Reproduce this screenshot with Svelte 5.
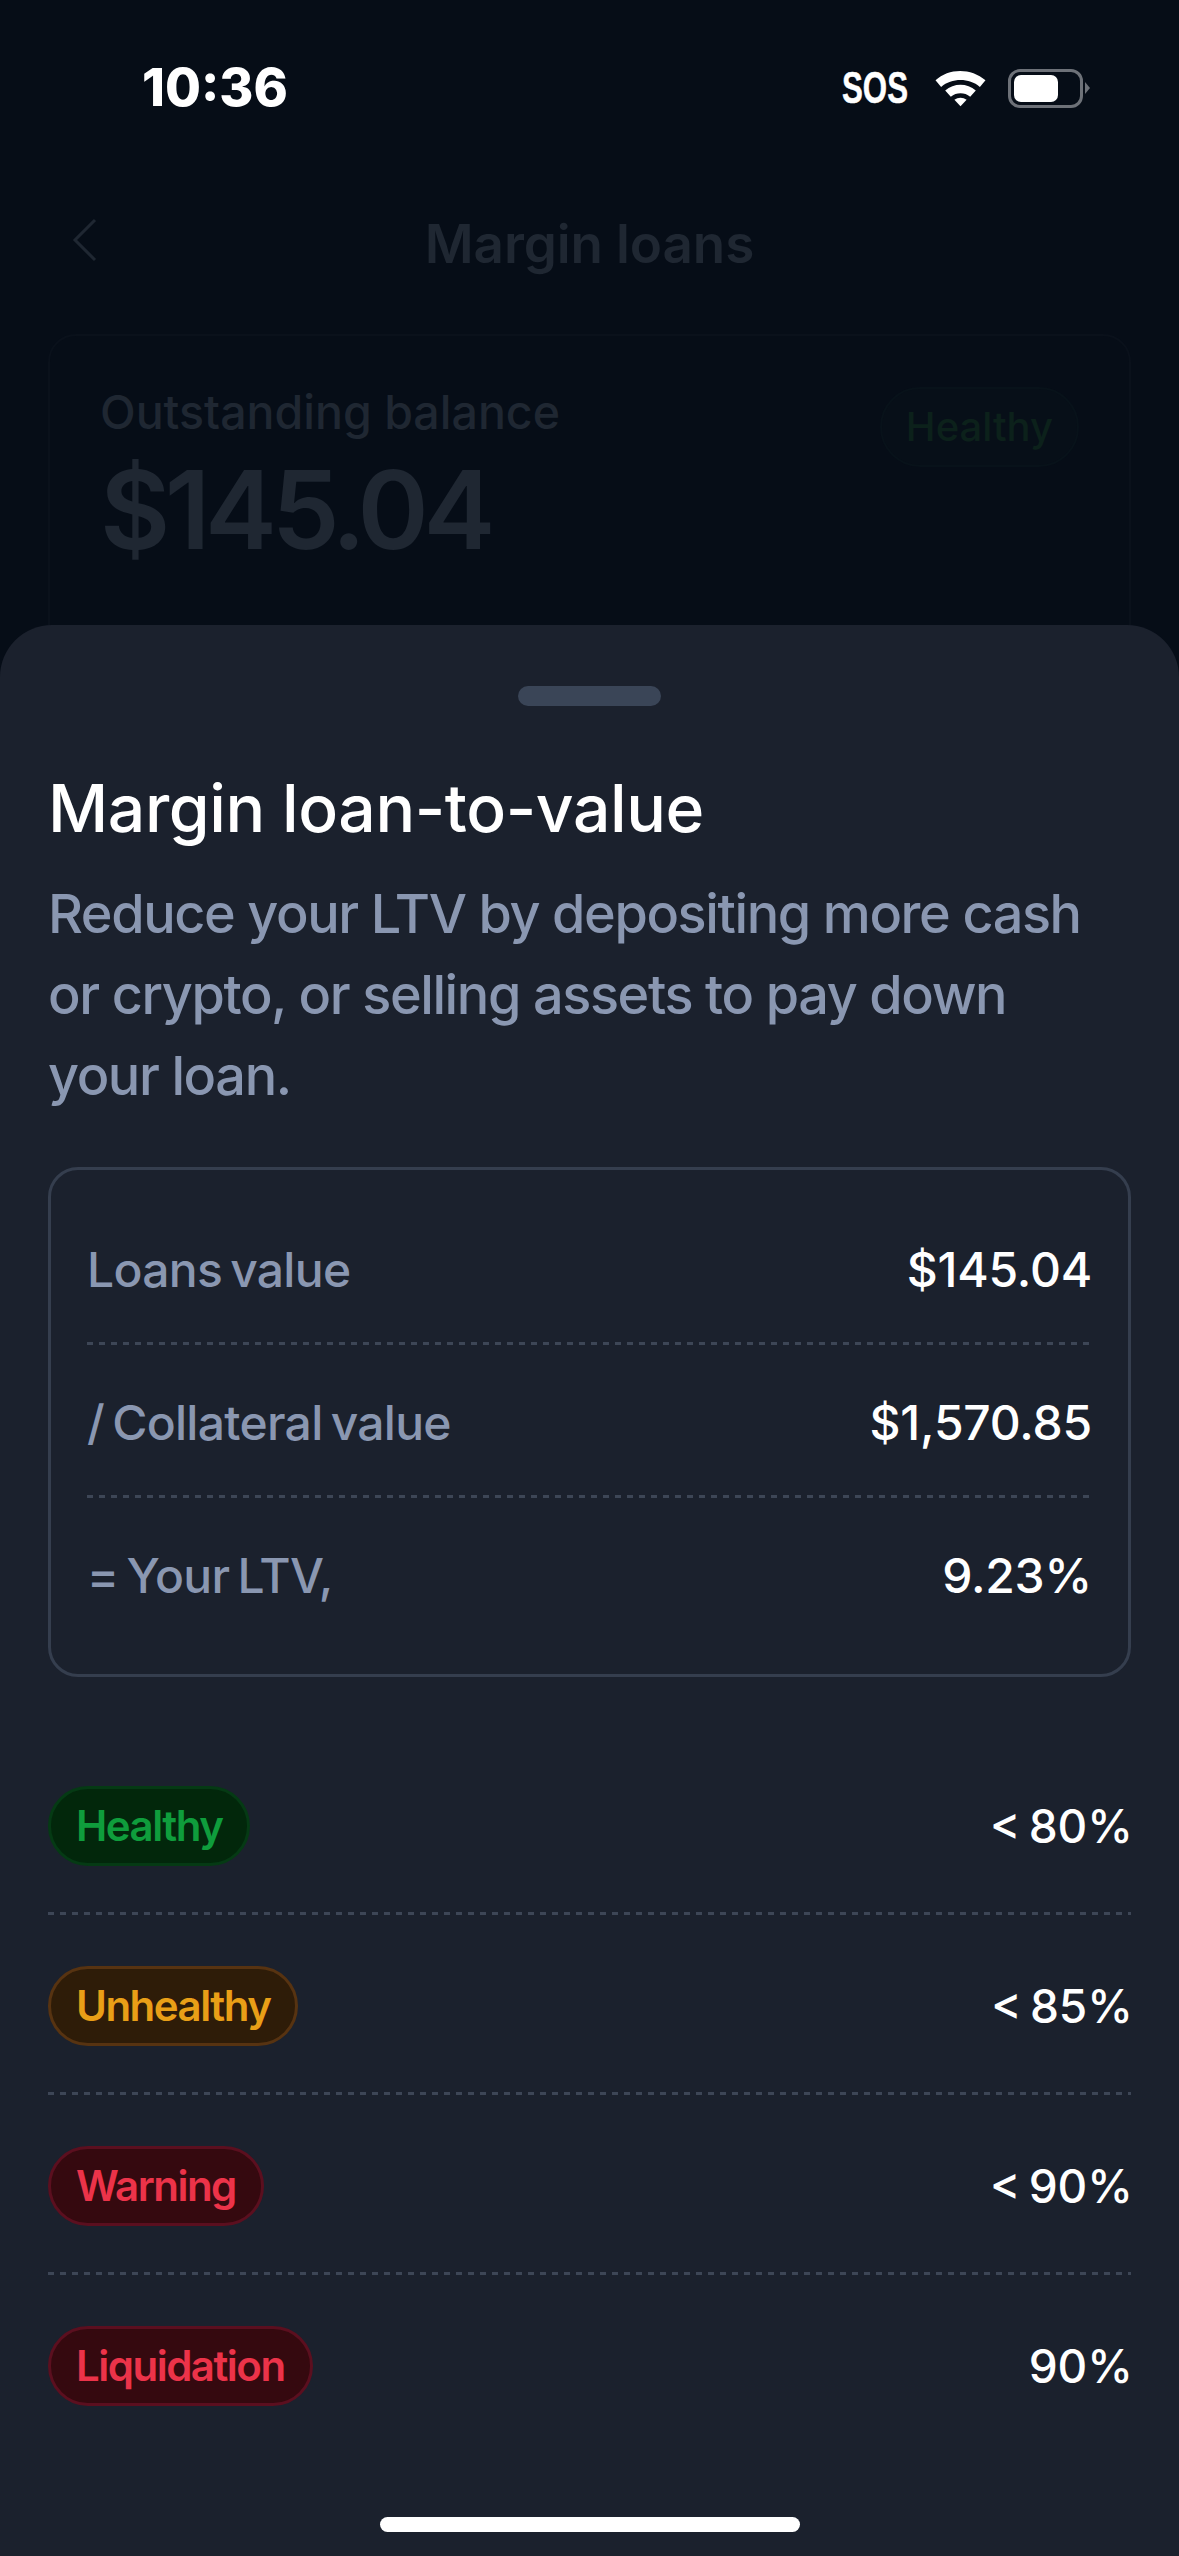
<script>
  const rows = [
    { label: 'Loans value', value: '$145.04' },
    { label: '/ Collateral value', value: '$1,570.85' },
    { label: '= Your LTV,', value: '9.23%' }
  ];
  const tiers = [
    { name: 'Healthy', tone: 'green', limit: '< 80%' },
    { name: 'Unhealthy', tone: 'amber', limit: '< 85%' },
    { name: 'Warning', tone: 'red', limit: '< 90%' },
    { name: 'Liquidation', tone: 'red', limit: '90%' }
  ];
</script>

<div class="screen">
  <div class="status">
    <span class="time">10:36</span>
    <div class="status-right">
      <span class="sos">SOS</span>
      <svg class="wifi" width="51" height="38" viewBox="0 0 50 36" aria-hidden="true">
        <path d="M0.5 10.5C13.5-1.8 35.5-1.8 49.5 10.5L44 17C33.5 8 16.5 8 6 17Z" fill="#fff"/>
        <path d="M10 20.5C18.5 13 31.5 13 40 20.5L34.5 26.5C29 22 21 22 15.5 26.5Z" fill="#fff"/>
        <path d="M19 29.5C22.5 26.8 27.5 26.8 31 29.5L25 36Z" fill="#fff"/>
      </svg>
      <div class="battery"><div class="battery-level"></div></div>
      <div class="battery-cap"></div>
    </div>
  </div>

  <div class="nav">
    <svg class="back" width="26" height="44" viewBox="0 0 26 44" aria-hidden="true">
      <path d="M23 2 3 22l20 20" fill="none" stroke="#1f2732" stroke-width="3"/>
    </svg>
    <span class="nav-title">Margin loans</span>
  </div>

  <div class="bg-card">
    <div class="bg-head">
      <div>
        <div class="bg-label">Outstanding balance</div>
        <div class="bg-amount">$145.04</div>
      </div>
      <span class="bg-pill">Healthy</span>
    </div>
  </div>

  <div class="sheet">
    <div class="grabber"></div>
    <h1>Margin loan-to-value</h1>
    <p>Reduce your LTV by depositing more cash or crypto, or selling assets to pay down your loan.</p>

    <div class="calc">
      {#each rows as row, i}
        {#if i > 0}<div class="dash"></div>{/if}
        <div class="calc-row">
          <span class="calc-label">{row.label}</span>
          <span class="calc-value">{row.value}</span>
        </div>
      {/each}
    </div>

    <div class="tiers">
      {#each tiers as tier, i}
        {#if i > 0}<div class="dash"></div>{/if}
        <div class="tier">
          <span class="pill {tier.tone}">{tier.name}</span>
          <span class="limit">{tier.limit}</span>
        </div>
      {/each}
    </div>

    <div class="home"></div>
  </div>
</div>

<style>
  :global(body) {
    margin: 0;
    background: #060d17;
  }
  .screen {
    position: relative;
    width: 1179px;
    height: 2556px;
    overflow: hidden;
    background: #060d17;
    font-family: Inter, "Liberation Sans", sans-serif;
  }
  .status {
    height: 176px;
    box-sizing: border-box;
    padding: 60px 89px 0 142px;
    display: flex;
    justify-content: space-between;
    align-items: flex-start;
  }
  .time {
    font-size: 52px;
    line-height: 56px;
    font-weight: 800;
    color: #fff;
    font-family: Inter, sans-serif;
  }
  .status-right {
    display: flex;
    align-items: center;
    height: 56px;
  }
  .sos {
    font-family: "Liberation Sans", sans-serif;
    font-weight: 700;
    font-size: 44px;
    color: #fff;
    -webkit-text-stroke: 0.5px #fff;
    transform: scaleX(0.71);
    transform-origin: left center;
    width: 66px;
  }
  .wifi {
    margin-left: 27px;
  }
  .battery {
    margin-left: 22px;
    width: 75px;
    height: 39px;
    box-sizing: border-box;
    border: 3px solid #6d7178;
    border-radius: 12px;
    padding: 3px;
  }
  .battery-level {
    width: 44px;
    height: 27px;
    background: #fff;
    border-radius: 7px;
  }
  .battery-cap {
    margin-left: 2px;
    width: 0;
    height: 0;
    border-left: 5px solid #6d7178;
    border-top: 6px solid transparent;
    border-bottom: 6px solid transparent;
  }
  .nav {
    position: relative;
    height: 136px;
    display: flex;
    align-items: center;
    justify-content: center;
  }
  .back {
    position: absolute;
    left: 72px;
    top: 42px;
  }
  .nav-title {
    font-size: 53px;
    letter-spacing: -0.1px;
    font-weight: 600;
    color: #1f2732;
  }
  .bg-card {
    margin: 22px 48px 0;
    height: 500px;
    box-sizing: border-box;
    border: 2px solid #0a111b;
    border-radius: 28px;
    padding: 48px 50px;
  }
  .bg-head {
    display: flex;
    justify-content: space-between;
    align-items: flex-start;
  }
  .bg-label {
    font-size: 46.5px;
    line-height: 56px;
    font-weight: 500;
    color: #1f2732;
  }
  .bg-amount {
    margin-top: 10px;
    font-size: 108px;
    letter-spacing: -5.4px;
    line-height: 120px;
    font-weight: 600;
    color: #1f2732;
  }
  .bg-pill {
    margin-top: 3px;
    padding: 14px 24px;
    font-size: 40px;
    line-height: 48px;
    font-weight: 500;
    color: #0c211b;
    background: #070f18;
    border: 2px solid #08121a;
    border-radius: 40px;
  }
  .sheet {
    position: absolute;
    left: 0;
    right: 0;
    top: 625px;
    bottom: 0;
    background: #1b212d;
    border-radius: 52px 52px 0 0;
    padding: 61px 48px 0;
    box-sizing: border-box;
    display: flex;
    flex-direction: column;
  }
  .grabber {
    align-self: center;
    width: 143px;
    height: 20px;
    border-radius: 10px;
    background: #3a4557;
  }
  h1 {
    margin: 62px 0 0;
    font-size: 66px;
    letter-spacing: -0.4px;
    line-height: 80px;
    font-weight: 500;
    color: #fff;
  }
  p {
    margin: 25px 0 0;
    max-width: 1050px;
    font-size: 54px;
    letter-spacing: -1.4px;
    line-height: 81px;
    font-weight: 500;
    color: #8a97b1;
  }
  .calc {
    margin-top: 51px;
    border: 3px solid #353e4e;
    border-radius: 30px;
    padding: 24px 36px;
    display: flex;
    flex-direction: column;
  }
  .calc-row {
    height: 150px;
    display: flex;
    align-items: center;
    justify-content: space-between;
  }
  .calc-label {
    font-size: 48px;
    letter-spacing: -0.7px;
    word-spacing: -4px;
    font-weight: 450;
    color: #8a97b1;
  }
  .calc-value {
    font-size: 48px;
    letter-spacing: -0.2px;
    font-weight: 500;
    color: #fff;
  }
  .dash {
    height: 3px;
    margin: -2px 0 2px;
    background: repeating-linear-gradient(to right, #3d4656 0 6px, transparent 6px 12px);
  }
  .tiers {
    margin-top: 60px;
    display: flex;
    flex-direction: column;
  }
  .tier {
    height: 177px;
    display: flex;
    align-items: center;
    justify-content: space-between;
  }
  .pill {
    height: 80px;
    box-sizing: border-box;
    padding: 0 25px;
    display: flex;
    align-items: center;
    font-size: 42px;
    letter-spacing: -1.5px;
    font-weight: 600;
    border-radius: 40px;
    border: 3px solid;
  }
  .green {
    color: #0f9d3c;
    background: #02270b;
    border-color: #053a14;
  }
  .amber {
    color: #e99f17;
    background: #2e1c08;
    border-color: #573311;
  }
  .red {
    color: #ec3349;
    background: #35090f;
    border-color: #5b0f1f;
  }
  .limit {
    font-size: 46px;
    font-weight: 500;
    word-spacing: -4px;
    margin-right: -2px;
    color: #fff;
  }
  .home {
    position: absolute;
    left: 380px;
    bottom: 24px;
    width: 420px;
    height: 15px;
    border-radius: 8px;
    background: #fff;
  }
</style>
